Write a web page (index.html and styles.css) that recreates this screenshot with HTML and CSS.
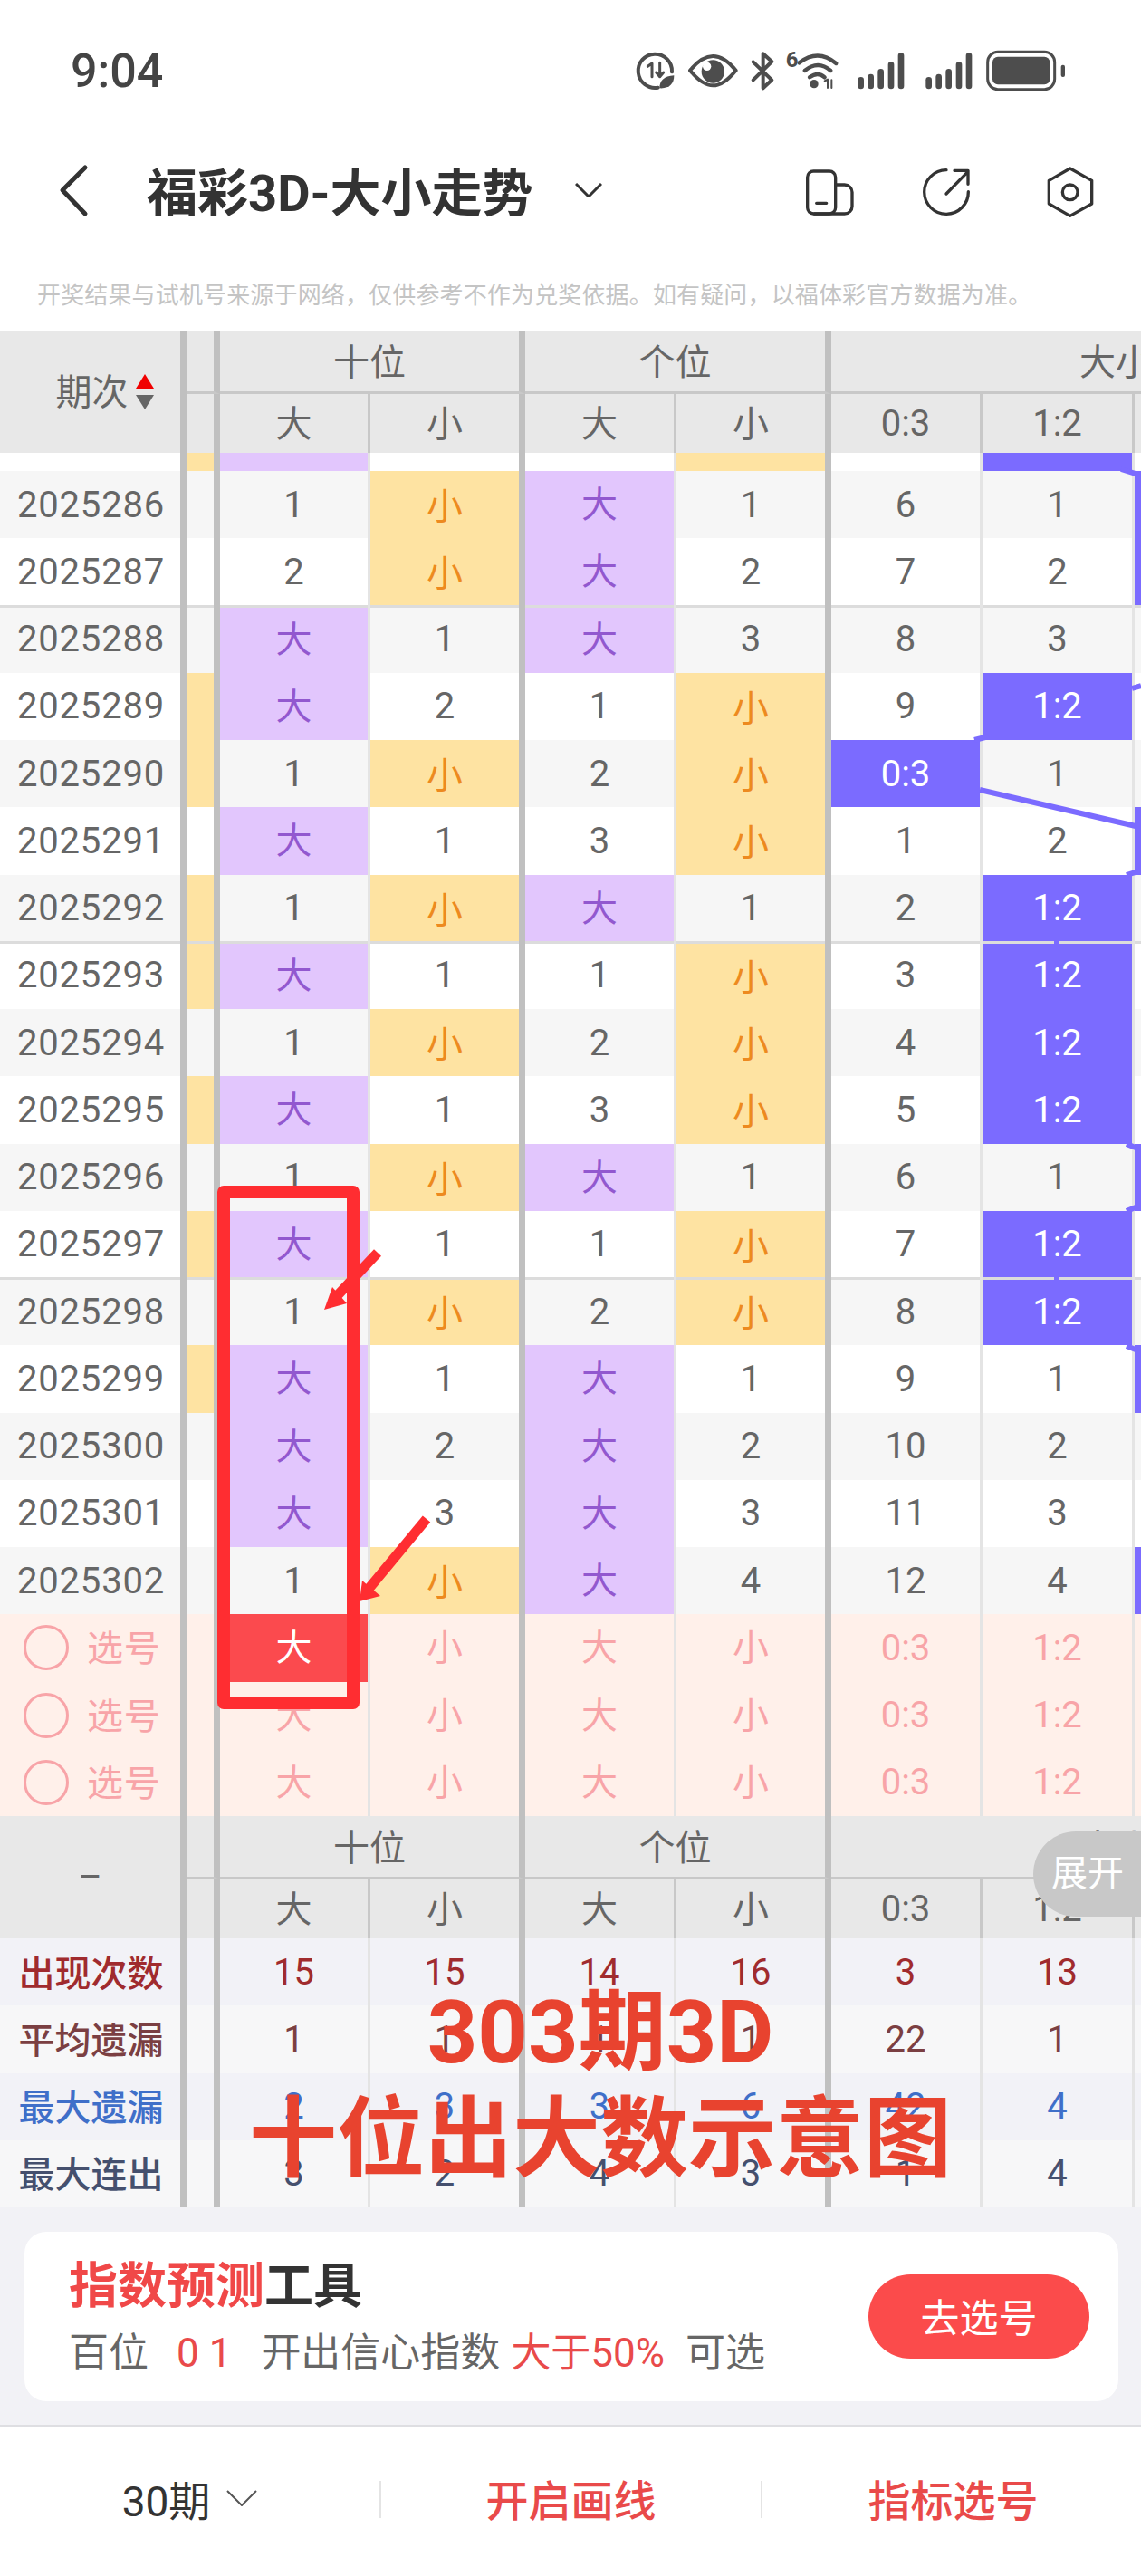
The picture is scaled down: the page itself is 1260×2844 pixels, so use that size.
FILE: index.html
```html
<!DOCTYPE html>
<html lang="zh-CN">
  <head>
    <meta charset="UTF-8" />
    <meta name="viewport" content="width=device-width, initial-scale=1.0" />
    <title>福彩3D-大小走势</title>
    <link rel="stylesheet" href="styles.css">
  </head>
  <body>
    <div id="page">
      <div class="status">
        <span class="time">9:04</span>
        <svg class="status-icons" viewBox="0 0 1500 240" width="500" height="80">
          <g fill="none" stroke="#4d4d4d" stroke-width="12" stroke-linecap="round" stroke-linejoin="round">
            <path d="M110 170A56 56 0 1 1 156 118" />
            <path d="M76 100l14-10v44M116 88v46M104 120l12 14 12-14" stroke-width="9" />
            <path d="M216 113C245 78 270 66 292 66s47 12 76 47c-29 36-54 50-76 50s-47-14-76-50z" />
            <path d="M425 85L487 145 458 172V58L487 84 425 145" />
            <path d="M578 88Q640 40 700 90M596 114Q640 78 682 114M612 136Q640 116 662 136" stroke-width="13" />
            <path d="M662 148l10-5v28M685 145v26" stroke-width="6" />
          </g>
          <g fill="#4d4d4d">
            <path d="M115 172c0-25 15-40 48-42c0 28-15 44-48 42z" />
            <circle cx="292" cy="117" r="38" />
            <circle cx="627" cy="158" r="14" />
            <text class="six" x="533" y="101">6</text>
            <rect x="772" y="135" width="20" height="40" rx="10" />
            <rect x="805" y="125" width="20" height="50" rx="10" />
            <rect x="838" y="108" width="20" height="67" rx="10" />
            <rect x="872" y="85" width="20" height="90" rx="10" />
            <rect x="905" y="55" width="20" height="120" rx="10" />
            <rect x="997" y="135" width="20" height="40" rx="10" />
            <rect x="1030" y="125" width="20" height="50" rx="10" />
            <rect x="1063" y="108" width="20" height="67" rx="10" />
            <rect x="1097" y="85" width="20" height="90" rx="10" />
            <rect x="1130" y="55" width="20" height="120" rx="10" />
            <rect x="1218" y="68" width="190" height="92" rx="18" />
            <rect x="1445" y="95" width="13" height="40" rx="6" />
          </g>
          <circle cx="272" cy="100" r="14" fill="#fff" />
          <rect x="1202" y="52" width="222" height="124" rx="34" fill="none" stroke="#4d4d4d" stroke-width="9" />
        </svg>
      </div>

      <div class="nav">
        <svg class="back" viewBox="0 0 40 60" width="40" height="60">
          <path d="M32 5L7 30l25 26" fill="none" stroke="#333" stroke-width="5" stroke-linecap="round" stroke-linejoin="round" />
        </svg>
        <h1 class="title">福彩3D-大小走势</h1>
        <svg class="title-arrow" viewBox="0 0 30 16" width="30" height="16">
          <path d="M1 1l14 14L29 1" fill="none" stroke="#333" stroke-width="3" />
        </svg>
        <svg class="nav-icons" viewBox="0 0 1050 240" width="350" height="80">
          <g fill="none" stroke="#333" stroke-width="10" stroke-linecap="round" stroke-linejoin="round">
            <rect x="65" y="57" width="93" height="141" rx="20" />
            <path d="M158 102h30a25 25 0 0 1 25 25v46a25 25 0 0 1-25 25H88M95 163h33" />
            <path d="M598 125A73 73 0 1 1 525 53M525 132L597 58M552 55h45v45" />
            <path d="M935 48l72 40v77l-72 40-70-40V88z" />
            <circle cx="935" cy="127" r="25" />
          </g>
        </svg>
      </div>

      <p class="notice">开奖结果与试机号来源于网络，仅供参考不作为兑奖依据。如有疑问，以福体彩官方数据为准。</p>

      <div class="head">
        <div class="head-period sorted"><span class="period-label">期次</span><span class="sort"><i class="up"></i><i class="down"></i></span></div>
        <div class="head-strip"></div>
        <div class="group g-2">十位</div>
        <div class="group g-2">个位</div>
        <div class="group g-3"><span>大小</span></div>
        <div class="sub-strip"></div>
        <div class="sub thin zh">大</div>
        <div class="sub thick zh">小</div>
        <div class="sub thin zh">大</div>
        <div class="sub thick zh">小</div>
        <div class="sub thin">0:3</div>
        <div class="sub thin">1:2</div>
        <div class="sub"></div>
      </div>

      <div class="rows">
        <div class="row cut"><div class="c"></div><div class="c small"></div><div class="c big"></div><div class="c"></div><div class="c"></div><div class="c small"></div><div class="c"></div><div class="c ratio"></div><div class="c"></div></div>
        <div class="row alt"><div class="c">2025286</div><div class="c"></div><div class="c">1</div><div class="c small">小</div><div class="c big">大</div><div class="c">1</div><div class="c">6</div><div class="c">1</div><div class="c ratio"></div></div>
        <div class="row sep"><div class="c">2025287</div><div class="c"></div><div class="c">2</div><div class="c small">小</div><div class="c big">大</div><div class="c">2</div><div class="c">7</div><div class="c">2</div><div class="c ratio"></div></div>
        <div class="row alt"><div class="c">2025288</div><div class="c"></div><div class="c big">大</div><div class="c">1</div><div class="c big">大</div><div class="c">3</div><div class="c">8</div><div class="c">3</div><div class="c"></div></div>
        <div class="row"><div class="c">2025289</div><div class="c small"></div><div class="c big">大</div><div class="c">2</div><div class="c">1</div><div class="c small">小</div><div class="c">9</div><div class="c ratio">1:2</div><div class="c"></div></div>
        <div class="row alt"><div class="c">2025290</div><div class="c small"></div><div class="c">1</div><div class="c small">小</div><div class="c">2</div><div class="c small">小</div><div class="c ratio">0:3</div><div class="c">1</div><div class="c"></div></div>
        <div class="row"><div class="c">2025291</div><div class="c"></div><div class="c big">大</div><div class="c">1</div><div class="c">3</div><div class="c small">小</div><div class="c">1</div><div class="c">2</div><div class="c ratio"></div></div>
        <div class="row alt sep"><div class="c">2025292</div><div class="c small"></div><div class="c">1</div><div class="c small">小</div><div class="c big">大</div><div class="c">1</div><div class="c">2</div><div class="c ratio">1:2</div><div class="c"></div></div>
        <div class="row"><div class="c">2025293</div><div class="c small"></div><div class="c big">大</div><div class="c">1</div><div class="c">1</div><div class="c small">小</div><div class="c">3</div><div class="c ratio">1:2</div><div class="c"></div></div>
        <div class="row alt"><div class="c">2025294</div><div class="c"></div><div class="c">1</div><div class="c small">小</div><div class="c">2</div><div class="c small">小</div><div class="c">4</div><div class="c ratio">1:2</div><div class="c"></div></div>
        <div class="row"><div class="c">2025295</div><div class="c small"></div><div class="c big">大</div><div class="c">1</div><div class="c">3</div><div class="c small">小</div><div class="c">5</div><div class="c ratio">1:2</div><div class="c"></div></div>
        <div class="row alt"><div class="c">2025296</div><div class="c"></div><div class="c">1</div><div class="c small">小</div><div class="c big">大</div><div class="c">1</div><div class="c">6</div><div class="c">1</div><div class="c ratio"></div></div>
        <div class="row sep"><div class="c">2025297</div><div class="c small"></div><div class="c big">大</div><div class="c">1</div><div class="c">1</div><div class="c small">小</div><div class="c">7</div><div class="c ratio">1:2</div><div class="c"></div></div>
        <div class="row alt"><div class="c">2025298</div><div class="c"></div><div class="c">1</div><div class="c small">小</div><div class="c">2</div><div class="c small">小</div><div class="c">8</div><div class="c ratio">1:2</div><div class="c"></div></div>
        <div class="row"><div class="c">2025299</div><div class="c small"></div><div class="c big">大</div><div class="c">1</div><div class="c big">大</div><div class="c">1</div><div class="c">9</div><div class="c">1</div><div class="c ratio"></div></div>
        <div class="row alt"><div class="c">2025300</div><div class="c"></div><div class="c big">大</div><div class="c">2</div><div class="c big">大</div><div class="c">2</div><div class="c">10</div><div class="c">2</div><div class="c"></div></div>
        <div class="row"><div class="c">2025301</div><div class="c"></div><div class="c big">大</div><div class="c">3</div><div class="c big">大</div><div class="c">3</div><div class="c">11</div><div class="c">3</div><div class="c"></div></div>
        <div class="row alt"><div class="c">2025302</div><div class="c"></div><div class="c">1</div><div class="c small">小</div><div class="c big">大</div><div class="c">4</div><div class="c">12</div><div class="c">4</div><div class="c ratio"></div></div>

        <div class="row pick"><div class="c"><span class="radio"></span>选号</div><div class="c"></div><div class="c zh on">大</div><div class="c zh">小</div><div class="c zh">大</div><div class="c zh">小</div><div class="c">0:3</div><div class="c">1:2</div><div class="c"></div></div>
        <div class="row pick"><div class="c"><span class="radio"></span>选号</div><div class="c"></div><div class="c zh">大</div><div class="c zh">小</div><div class="c zh">大</div><div class="c zh">小</div><div class="c">0:3</div><div class="c">1:2</div><div class="c"></div></div>
        <div class="row pick"><div class="c"><span class="radio"></span>选号</div><div class="c"></div><div class="c zh">大</div><div class="c zh">小</div><div class="c zh">大</div><div class="c zh">小</div><div class="c">0:3</div><div class="c">1:2</div><div class="c"></div></div>
      </div>

      <div class="head">
        <div class="head-period">–</div>
        <div class="head-strip"></div>
        <div class="group g-2">十位</div>
        <div class="group g-2">个位</div>
        <div class="group g-3"><span>大小</span></div>
        <div class="sub-strip"></div>
        <div class="sub thin zh">大</div>
        <div class="sub thick zh">小</div>
        <div class="sub thin zh">大</div>
        <div class="sub thick zh">小</div>
        <div class="sub thin">0:3</div>
        <div class="sub thin">1:2</div>
        <div class="sub"></div>
      </div>

      <div class="rows">
        <div class="row stat count"><div class="c">出现次数</div><div class="c"></div><div class="c">15</div><div class="c">15</div><div class="c">14</div><div class="c">16</div><div class="c">3</div><div class="c">13</div><div class="c"></div></div>
        <div class="row stat avg"><div class="c">平均遗漏</div><div class="c"></div><div class="c">1</div><div class="c">1</div><div class="c">1</div><div class="c">1</div><div class="c">22</div><div class="c">1</div><div class="c"></div></div>
        <div class="row stat max"><div class="c">最大遗漏</div><div class="c"></div><div class="c">2</div><div class="c">3</div><div class="c">3</div><div class="c">6</div><div class="c">42</div><div class="c">4</div><div class="c"></div></div>
        <div class="row stat run"><div class="c">最大连出</div><div class="c"></div><div class="c">3</div><div class="c">2</div><div class="c">4</div><div class="c">3</div><div class="c">1</div><div class="c">4</div><div class="c"></div></div>
      </div>

      <div class="tools">
        <div class="tool-card">
          <div class="tool-text">
            <h2 class="tool-title"><em>指数预测</em>工具</h2>
            <p class="tool-desc">
              <span>百位</span><em class="nums">0 1</em><span>开出信心指数</span><em class="limit">大于50%</em><span>可选</span>
            </p>
          </div>
          <button class="tool-button">去选号</button>
        </div>
      </div>

      <div class="bottom">
        <div class="bottom-item">30期
          <svg viewBox="0 0 34 18" width="34" height="18"><path d="M1 1l16 16L33 1" fill="none" stroke="#555" stroke-width="2" /></svg>
        </div>
        <div class="bottom-item red">开启画线</div>
        <div class="bottom-item red">指标选号</div>
      </div>

      <div class="expand">展开</div>

      <svg class="marks" viewBox="0 0 1260 2844" width="1260" height="2844">
        <g stroke="#7b6bff" stroke-width="6" fill="none">
          <path d="M1238 518l16 5M1250 760l10-3M1076 817l16-4M1082 872l172 40M1244 966l16-5M1244 1263l10 4M1244 1337l10-4M1244 1486l10 4" />
          <path d="M1167 1037v6M1167 1408v6" />
        </g>
        <g fill="#ff2d31">
          <path d="M417 1383l-47 50" stroke="#ff2d31" stroke-width="11" />
          <path d="M358 1446l25-7-16-18z" />
          <path d="M471 1677l-63 76" stroke="#ff2d31" stroke-width="11" />
          <path d="M397 1768l23-6-20-17z" />
        </g>
        <rect x="247" y="1316" width="143" height="564" fill="none" stroke="#ff2d31" stroke-width="14" stroke-linejoin="round" />
      </svg>

      <div class="caption">303期3D<br />十位出大数示意图</div>
    </div>
  </body>
</html>
```

FILE: styles.css
```css
* {
  margin: 0;
  padding: 0;
  box-sizing: border-box;
}

body {
  background-color: #fff;
  font-family: Roboto, "Noto Sans CJK SC", sans-serif;
  color: #666;
}

#page {
  position: relative;
  width: 1260px;
  height: 2844px;
  overflow: hidden;
}

em {
  font-style: normal;
}

/* top of the screen */
.status {
  height: 140px;
  padding: 40px 70px 0 78px;
  display: flex;
  justify-content: space-between;
}

.time {
  font-size: 52px;
  font-weight: 500;
  line-height: 78px;
  color: #444;
}

.six {
  font-size: 72px;
  font-weight: 700;
}

.nav {
  height: 140px;
  padding: 0 40px 0 62px;
  display: flex;
  align-items: center;
}

.title {
  margin-left: 60px;
  padding-bottom: 4px;
  font-size: 56px;
  font-weight: 700;
  color: #333;
}

.title-arrow {
  margin-left: 46px;
}

.nav-icons {
  margin-left: auto;
}

.notice {
  height: 85px;
  padding: 32px 0 0 41px;
  font-size: 26px;
  line-height: 28px;
  letter-spacing: 0.15px;
  color: #c4c4c4;
}

/* table header */
.head {
  display: grid;
  grid-template-columns: 206px 37px 166px 171px 167px 171px 167px 168px 7px;
  grid-template-rows: 70px 65px;
  background-color: #e8e8e8;
  font-size: 40px;
}

.head > div {
  display: flex;
  align-items: center;
  justify-content: center;
}

.head-period {
  grid-row: span 2;
  border-right: 7px solid #c0c0c0;
  gap: 8px;
}

.head > .sorted {
  padding-left: 32px;
}

.period-label {
  margin-bottom: 5px;
}

.sort {
  display: flex;
  flex-direction: column;
  gap: 7px;
}

.sort i {
  display: block;
  width: 0;
  height: 0;
  border-left: 10px solid transparent;
  border-right: 10px solid transparent;
}

.sort .up {
  border-bottom: 16px solid #f00000;
}

.sort .down {
  border-top: 16px solid #666;
}

.head-strip {
  border-right: 7px solid #c0c0c0;
  border-bottom: 3px solid #c8c8c8;
}

.head > .group {
  padding-bottom: 4px;
  border-right: 7px solid #c0c0c0;
  border-bottom: 3px solid #c8c8c8;
}

.g-2 {
  grid-column: span 2;
}

.head > .g-3 {
  grid-column: span 3;
  border-right: none;
  justify-content: flex-start;
  padding-left: 274px;
  overflow: hidden;
  white-space: nowrap;
}

.sub-strip {
  border-right: 7px solid #c0c0c0;
}

.sub.thin {
  border-right: 3px solid #c8c8c8;
}

.sub.thick {
  border-right: 7px solid #c0c0c0;
}

.zh {
  padding-bottom: 6px;
}

/* table body */
.row {
  display: grid;
  grid-template-columns: 206px 37px 166px 171px 167px 171px 167px 168px 7px;
  height: 74.25px;
  background-color: #fff;
  font-size: 40px;
}

.row.cut {
  height: 20px;
}

.row.alt {
  background-color: #f6f6f6;
}

.c {
  display: flex;
  align-items: center;
  justify-content: center;
  border-right: 3px solid #e4e4e4;
}

.row .c:nth-child(1),
.row .c:nth-child(2),
.row .c:nth-child(4),
.row .c:nth-child(6) {
  border-right: 7px solid #c0c0c0;
}

.row .c:nth-child(1) {
  padding-left: 2px;
  letter-spacing: 0.8px;
}

.row .c:nth-child(9) {
  border-right: none;
}

.sep .c {
  position: relative;
}

.sep .c::after {
  content: "";
  position: absolute;
  left: 0;
  right: 0;
  bottom: -2px;
  height: 3px;
  background-color: #dcdcdc;
}

.big {
  padding-bottom: 6px;
  background-color: #e2c6fd;
  color: #9258cf;
}

.small {
  padding-bottom: 2px;
  background-color: #fee3a2;
  color: #ed8a1f;
}

.ratio {
  background-color: #7b6bff;
  color: #fff;
}

.pick {
  background-color: #fff0ea;
  color: #f8a4a8;
}

.pick .c:nth-child(1) {
  gap: 20px;
  justify-content: flex-start;
  padding: 0 0 4px 26px;
}

.radio {
  width: 50px;
  height: 50px;
  margin-top: 4px;
  border: 3px solid #f8a4a8;
  border-radius: 50%;
}

.pick .on {
  background-color: #fb4a4e;
  color: #fff;
}

.stat {
  background-color: #f7f7f8;
}

.stat .c:nth-child(1) {
  padding: 0 0 3px 2px;
  letter-spacing: 0;
  font-weight: 500;
}

.count,
.max {
  background-color: #f2f2f7;
}

.count {
  color: #a02b2e;
}

.avg {
  color: #7b3f42;
}

.max {
  color: #3f6fc9;
}

.run {
  color: #45506e;
}

/* tool card and bottom bar */
.tools {
  height: 243px;
  padding: 27px 25px 0 27px;
  background-color: #f2f2f6;
  border-bottom: 3px solid #dedee2;
}

.tool-card {
  height: 187px;
  padding: 0 32px 0 49px;
  display: flex;
  align-items: center;
  justify-content: space-between;
  background-color: #fff;
  border-radius: 24px;
}

.tool-title {
  font-size: 54px;
  font-weight: 700;
  line-height: 70px;
  color: #333;
}

.tool-title em {
  color: #f04848;
}

.tool-desc {
  display: flex;
  margin-top: 10px;
  font-size: 44px;
  line-height: 56px;
}

.tool-desc em {
  color: #e94a4a;
}

.tool-desc .nums {
  margin: 0 33px 0 31px;
}

.tool-desc .limit {
  margin: 0 23px 0 12px;
}

.tool-button {
  width: 244px;
  height: 93px;
  padding-bottom: 4px;
  border: none;
  border-radius: 47px;
  background-color: #fb4b4b;
  color: #fff;
  font-family: inherit;
  font-size: 43px;
}

.bottom {
  height: 162px;
  padding-bottom: 4px;
  display: flex;
  align-items: center;
}

.bottom-item {
  flex: none;
  width: 421px;
  height: 41px;
  padding-bottom: 3px;
  display: flex;
  align-items: center;
  justify-content: center;
  gap: 18px;
  font-size: 46px;
  color: #333;
  border-right: 2px solid #e4e4e4;
}

.bottom-item:last-child {
  border-right: none;
}

.bottom-item.red {
  font-size: 47px;
  font-weight: 500;
  color: #e94a4a;
}

/* things lying over the table */
.expand {
  position: absolute;
  left: 1141px;
  top: 2022px;
  width: 119px;
  height: 94px;
  padding: 0 0 8px 20px;
  display: flex;
  align-items: center;
  background-color: #c8c8c8;
  border-radius: 47px 0 0 47px;
  color: #fff;
  font-size: 40px;
}

.marks {
  position: absolute;
  left: 0;
  top: 0;
  pointer-events: none;
}

.caption {
  position: absolute;
  left: 263px;
  top: 2185px;
  width: 800px;
  text-align: center;
  font-size: 97px;
  font-weight: 700;
  line-height: 118px;
  color: #e8432f;
}
```
